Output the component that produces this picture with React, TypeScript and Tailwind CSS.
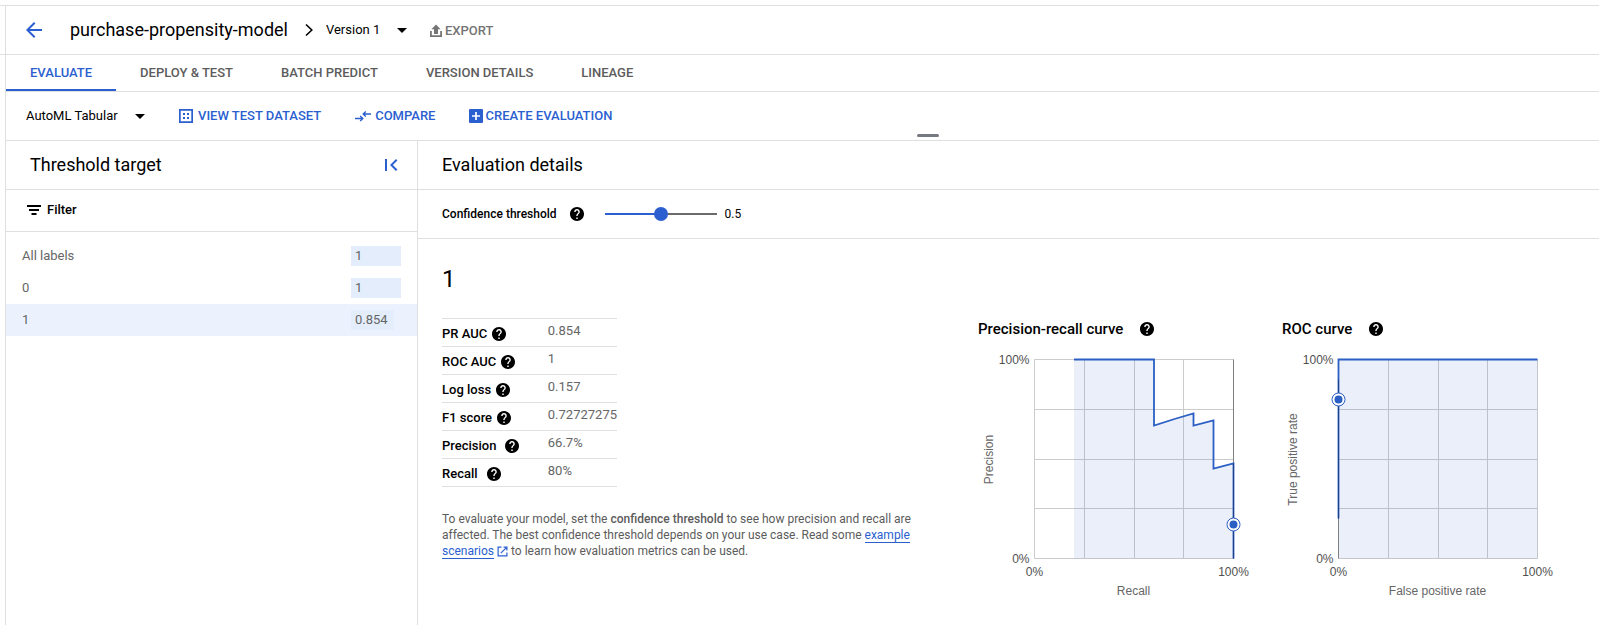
import { useState } from "react";
import type { ReactNode } from "react";
import { MdArrowBack, MdArrowDropDown, MdFirstPage } from "react-icons/md";

const TABS = ["EVALUATE", "DEPLOY & TEST", "BATCH PREDICT", "VERSION DETAILS", "LINEAGE"];

const LABELS = [
  { name: "All labels", value: "1", score: 1 },
  { name: "0", value: "1", score: 1 },
  { name: "1", value: "0.854", score: 0.854 },
];

const METRICS = [
  { name: "PR AUC", value: "0.854", gap: "gap-[5px]" },
  { name: "ROC AUC", value: "1", gap: "gap-[5px]" },
  { name: "Log loss", value: "0.157", gap: "gap-[5px]" },
  { name: "F1 score", value: "0.72727275", gap: "gap-[5px]" },
  { name: "Precision", value: "66.7%", gap: "gap-[9px]" },
  { name: "Recall", value: "80%", gap: "gap-[9px]" },
];

function ChevronIcon() {
  return (
    <svg className="size-3.5" viewBox="0 0 14 14" fill="none" stroke="currentColor" strokeWidth="1.6" aria-hidden="true">
      <path d="M4 1.5 9.8 7 4 12.5" />
    </svg>
  );
}

function UploadIcon() {
  return (
    <svg className="size-3.5" viewBox="0 0 14 14" fill="currentColor" aria-hidden="true">
      <path d="M7 0.5 11.6 5.2H9V10H5V5.2H2.4z" />
      <path d="M1 7h1.8v4.2h8.4V7H13v6H1z" />
    </svg>
  );
}

function DatasetIcon() {
  return (
    <svg className="size-3.5" viewBox="0 0 14 14" fill="currentColor" aria-hidden="true">
      <path fillRule="evenodd" d="M0 0h14v14H0zM1.7 1.7v10.6h10.6V1.7z" />
      <path d="M4 4h2v2H4zM8 4h2v2H8zM4 8h2v2H4zM8 8h2v2H8z" />
    </svg>
  );
}

function CompareIcon() {
  return (
    <svg className="h-3 w-4" viewBox="0 0 16 12" fill="none" stroke="currentColor" strokeWidth="1.4" aria-hidden="true">
      <path d="M0 8.5h7.5M5.2 6 7.8 8.5 5.2 11" />
      <path d="M16 4H8.5M10.8 1.5 8.2 4l2.6 2.5" />
    </svg>
  );
}

function AddBoxIcon() {
  return (
    <svg className="size-3.5" viewBox="0 0 14 14" aria-hidden="true">
      <rect width="14" height="14" rx="1" fill="currentColor" />
      <path d="M7 3v8M3 7h8" stroke="#fff" strokeWidth="1.7" />
    </svg>
  );
}

function FilterIcon() {
  return (
    <svg className="h-[10px] w-[14px]" viewBox="0 0 14 10" fill="currentColor" aria-hidden="true">
      <path d="M0 0h14v2H0zM2 4h10v2H2zM4.5 8h5v2h-5z" />
    </svg>
  );
}

function ExternalIcon() {
  return (
    <svg
      className="ml-[3px] inline size-[11px] align-[-2px]"
      viewBox="0 0 11 11"
      fill="none"
      stroke="currentColor"
      strokeWidth="1.2"
      aria-hidden="true"
    >
      <path d="M4.5 1.1H1.1v8.8h8.8V6.5M6.5 1.1h3.4v3.4M9.9 1.1 3.8 7.2" />
    </svg>
  );
}

function Help({ label }: { label: string }) {
  return (
    <button type="button" aria-label={`Help: ${label}`} className="shrink-0 text-black">
      <svg className="block size-3.5" viewBox="2 2 20 20" fill="currentColor" aria-hidden="true">
        <path d="M12 2C6.48 2 2 6.48 2 12s4.48 10 10 10 10-4.48 10-10S17.52 2 12 2zm1 17h-2v-2h2v2zm2.07-7.75-.9.92C13.45 12.9 13 13.5 13 15h-2v-.5c0-1.1.45-2.1 1.17-2.83l1.24-1.26c.37-.36.59-.86.59-1.41 0-1.1-.9-2-2-2s-2 .9-2 2H8c0-2.21 1.79-4 4-4s4 1.79 4 4c0 .88-.36 1.68-.93 2.25z" />
      </svg>
    </button>
  );
}

function DropDown({ label, option, width }: { label: string; option: string; width: string }) {
  return (
    <div className={`relative flex items-center ${width}`}>
      <select aria-label={label} className="w-full appearance-none bg-transparent text-[13px] leading-5 outline-none">
        <option>{option}</option>
      </select>
      <MdArrowDropDown className="pointer-events-none absolute right-0 size-6" />
    </div>
  );
}

function Action({ icon, children, gap }: { icon: ReactNode; children: ReactNode; gap: string }) {
  return (
    <button type="button" className={`flex items-center whitespace-nowrap text-[13px] leading-5 font-medium text-[#2b5fd0] ${gap}`}>
      {icon}
      {children}
    </button>
  );
}

type CurveProps = {
  title: string;
  xLabel: string;
  yLabel: string;
  line: string;
  area: string;
  cursorX: number;
  cursorY: number;
  shade: string;
};

function Curve({ title, xLabel, yLabel, line, area, cursorX, cursorY, shade }: CurveProps) {
  return (
    <section className="w-[304px]">
      <h3 className="flex h-[22px] items-center gap-[17px] text-[15px] font-medium">
        {title}
        <Help label={title} />
      </h3>
      <svg className="block h-[260px] w-[304px]" viewBox="0 0 304 260" role="img" aria-label={title}>
        <g transform="translate(56.5 19.5)">
          <path
            d="M0 0h199v199H0zM50 0v199M100 0v199M149 0v199M0 50h199M0 100h199M0 149h199"
            fill="none"
            stroke="#cccccc"
          />
          <path d={area} fill="#3360cc" fillOpacity="0.1" />
          <path d={`M${cursorX} 0v199`} stroke="#808080" />
          <path d={line} fill="none" stroke="#2b5fc4" strokeWidth="1.8" />
          <path d={shade} stroke="#1c3f86" />
          <circle cx={cursorX} cy={cursorY} r="6.5" fill="#fff" stroke="#2b5fc4" />
          <circle cx={cursorX} cy={cursorY} r="4" fill="#2b5fc4" />
          <g fill="#505050" fontSize="12" fontFamily="'Liberation Sans', Arial, sans-serif">
            <text x="-5" y="4" textAnchor="end">100%</text>
            <text x="-5" y="203" textAnchor="end">0%</text>
            <text x="0" y="216" textAnchor="middle">0%</text>
            <text x="199" y="216" textAnchor="middle">100%</text>
          </g>
          <g fill="#666666" fontSize="12" fontFamily="'Liberation Sans', Arial, sans-serif">
            <text x="99" y="235" textAnchor="middle">{xLabel}</text>
            <text transform="translate(-42 100) rotate(-90)" textAnchor="middle">{yLabel}</text>
          </g>
        </g>
      </svg>
    </section>
  );
}

export default function App() {
  const [threshold, setThreshold] = useState(0.5);
  const fill = threshold * 100;

  return (
    <div className="flex min-h-screen bg-white pt-[5px] font-[Roboto,sans-serif] text-black">
      <div className="w-[5px] shrink-0 border-t border-[#dfdfdf]">
        <div className="h-[49px] border-b border-[#dfdfdf]" />
      </div>
      <div className="flex min-w-0 flex-1 flex-col border-t border-l border-[#dfdfdf]">
        <header className="flex h-[49px] items-center border-b border-[#dfdfdf] pl-4">
          <button type="button" aria-label="Back" className="text-[#2b5fd0]">
            <MdArrowBack className="size-6" />
          </button>
          <h1 className="mr-3.5 ml-6 text-lg whitespace-nowrap">purchase-propensity-model</h1>
          <ChevronIcon />
          <div className="ml-2.5 flex items-center">
            <DropDown label="Version" option="Version 1" width="w-[88px]" />
          </div>
          <button type="button" className="ml-[15px] flex items-center gap-0.5 pt-px text-[13px] leading-5 font-medium text-[#757575]">
            <UploadIcon />
            EXPORT
          </button>
        </header>

        <nav className="flex h-[37px] border-b border-[#dfdfdf]">
          {TABS.map((tab, i) => (
            <a
              key={tab}
              href="#"
              className={
                i === 0
                  ? "flex items-center border-b-2 border-[#2b5fd0] px-6 pt-0.5 text-[13px] font-medium text-[#2b5fd0]"
                  : "flex items-center border-b-2 border-transparent px-6 pt-0.5 text-[13px] font-medium text-[#5c5c5c]"
              }
            >
              {tab}
            </a>
          ))}
        </nav>

        <div className="relative flex h-[49px] items-center border-b border-[#dfdfdf] pl-5">
          <DropDown label="Model type" option="AutoML Tabular" width="w-[126px]" />
          <div className="ml-[27px] flex items-center gap-[34px]">
            <Action icon={<DatasetIcon />} gap="gap-[5px]">VIEW TEST DATASET</Action>
            <Action icon={<CompareIcon />} gap="gap-1">COMPARE</Action>
            <Action icon={<AddBoxIcon />} gap="gap-0.5">CREATE EVALUATION</Action>
          </div>
          <div className="absolute bottom-[3px] left-[57.2%] h-[3px] w-[22px] rounded-full bg-[#757980]" />
        </div>

        <div className="flex flex-1">
          <aside className="w-[412px] shrink-0 border-r border-[#dfdfdf]">
            <div className="flex h-[49px] items-center justify-between border-b border-[#dfdfdf] pr-3.5 pl-6">
              <h2 className="text-lg">Threshold target</h2>
              <button type="button" aria-label="Collapse panel" className="text-[#2b5fd0]">
                <MdFirstPage className="size-6" />
              </button>
            </div>
            <div className="flex h-[42px] items-center border-b border-[#dfdfdf] pb-0.5 pl-[21px]">
              <button type="button" className="flex items-center gap-1.5 text-[13px] font-medium">
                <FilterIcon />
                Filter
              </button>
            </div>
            <table className="mt-2 w-full text-[13px] text-[#666]">
              <tbody>
                {LABELS.map((row, i) => (
                  <tr key={row.name} className={i === 2 ? "h-8 bg-[#ebf2fe]" : "h-8"}>
                    <td className="pl-4">{row.name}</td>
                    <td className="w-[66px] pr-4">
                      <div className="h-5 bg-[#e3edfc] pl-1 leading-5" style={{ width: `${row.score * 100}%` }}>
                        {row.value}
                      </div>
                    </td>
                  </tr>
                ))}
              </tbody>
            </table>
          </aside>

          <main className="min-w-0 flex-1">
            <div className="flex h-[49px] items-center border-b border-[#dfdfdf] pl-6">
              <h2 className="text-lg">Evaluation details</h2>
            </div>
            <div className="flex h-[49px] items-center border-b border-[#dfdfdf] pb-px pl-6 text-xs">
              <label htmlFor="threshold" className="mr-[13px] font-medium">Confidence threshold</label>
              <Help label="Confidence threshold" />
              <input
                id="threshold"
                type="range"
                min="0"
                max="1"
                step="0.01"
                value={threshold}
                onChange={(e) => setThreshold(Number(e.target.value))}
                className="mr-2 ml-[21px] h-4 w-28 appearance-none bg-[length:100%_2px] bg-center bg-no-repeat [&::-webkit-slider-thumb]:size-[14px] [&::-webkit-slider-thumb]:appearance-none [&::-webkit-slider-thumb]:rounded-full [&::-webkit-slider-thumb]:bg-[#2b5fd0]"
                style={{ backgroundImage: `linear-gradient(to right, #2b5fd0 ${fill}%, #6b6b6b ${fill}%)` }}
              />
              <output htmlFor="threshold">{threshold}</output>
            </div>

            <div className="px-6 pt-6">
              <h2 className="text-2xl leading-8">1</h2>
              <div className="mt-[23px] flex">
                <div className="min-w-0 flex-1">
                  <table className="w-[175px] text-[13px]">
                    <tbody>
                      {METRICS.map((m) => (
                        <tr key={m.name} className="h-7 border-y border-[#dfdfdf]">
                          <th scope="row" className="p-0 pt-0.5 text-left font-medium">
                            <div className={`flex items-center ${m.gap}`}>
                              {m.name}
                              <Help label={m.name} />
                            </div>
                          </th>
                          <td className="w-[69px] p-0 pb-1 text-[#666]">{m.value}</td>
                        </tr>
                      ))}
                    </tbody>
                  </table>
                  <p className="mt-6 max-w-[472px] text-xs leading-4 text-[#5c5c5c]">
                    To evaluate your model, set the <b className="font-medium">confidence threshold</b> to see how
                    precision and recall are affected. The best confidence threshold depends on your use case. Read
                    some{" "}
                    <a href="#" className="text-[#2b5fd0]">
                      <span className="border-b border-[#2b5fd0]">example scenarios</span>
                      <ExternalIcon />
                    </a>{" "}
                    to learn how evaluation metrics can be used.
                  </p>
                </div>
                <div className="-mr-[11px] flex shrink-0">
                  <Curve
                    title="Precision-recall curve"
                    xLabel="Recall"
                    yLabel="Precision"
                    line="M39.5 0H119.5V66L140 59.5 159 54V66L179 61V109L199 104V199"
                    area="M39.5 0H119.5V66L140 59.5 159 54V66L179 61V109L199 104V199H39.5z"
                    cursorX={199}
                    cursorY={165}
                    shade="M199 104v95"
                  />
                  <Curve
                    title="ROC curve"
                    xLabel="False positive rate"
                    yLabel="True positive rate"
                    line="M0 159V0H199"
                    area="M0 0H199V199H0z"
                    cursorX={0}
                    cursorY={40}
                    shade="M0 20v139"
                  />
                </div>
              </div>
            </div>
          </main>
        </div>
      </div>
    </div>
  );
}
